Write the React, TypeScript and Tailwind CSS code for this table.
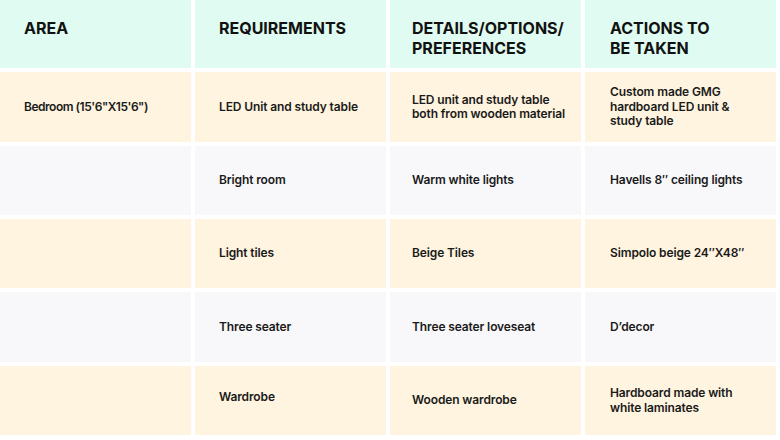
import React from "react";

const header = ["AREA", "REQUIREMENTS", "DETAILS/OPTIONS/\nPREFERENCES", "ACTIONS TO\nBE TAKEN"];

const rows: string[][] = [
  ["Bedroom (15'6\"X15'6\")", "LED Unit and study table", "LED unit and study table\nboth from wooden material", "Custom made GMG\nhardboard LED unit &\nstudy table"],
  ["", "Bright room", "Warm white lights", "Havells 8\u2033 ceiling lights"],
  ["", "Light tiles", "Beige Tiles", "Simpolo beige 24\u2033X48\u2033"],
  ["", "Three seater", "Three seater loveseat", "D\u2019decor"],
  ["", "Wardrobe", "Wooden wardrobe", "Hardboard made with\nwhite laminates"],
];

const pads = ["pl-6", "pl-6", "pl-[22px]", "pl-[25px]"];

export default function App() {
  return (
    <div className="w-[780px] h-[440px] bg-white overflow-hidden" style={{ fontFamily: 'Inter, "Liberation Sans", Arial, sans-serif' }}>
      <div className="grid grid-cols-4 gap-1 w-[776px] grid-rows-[68px_70px_69px_69px_70px_69px]">
        {header.map((h, i) => (
          <div key={i} className={`bg-[#e0fbf1] pt-[18px] ${pads[i]} pr-2 text-[16px] leading-[20px] font-bold text-[#111] whitespace-pre-line`}>
            {h}
          </div>
        ))}
        {rows.map((r, ri) =>
          r.map((c, ci) => (
            <div
              key={`${ri}-${ci}`}
              className={`${ri % 2 === 0 ? "bg-[#fff4df]" : "bg-[#f8f8fa]"} flex items-center ${pads[ci]} pr-2 ${ri === 4 && ci === 1 ? "pb-[7px]" : ""} ${ri === 0 && ci === 0 ? "tracking-[-0.04em]" : "tracking-[-0.01em]"} text-[12px] leading-[14.5px] font-semibold text-[#1a1a1a] whitespace-pre-line`}
            >
              {c}
            </div>
          ))
        )}
      </div>
    </div>
  );
}
